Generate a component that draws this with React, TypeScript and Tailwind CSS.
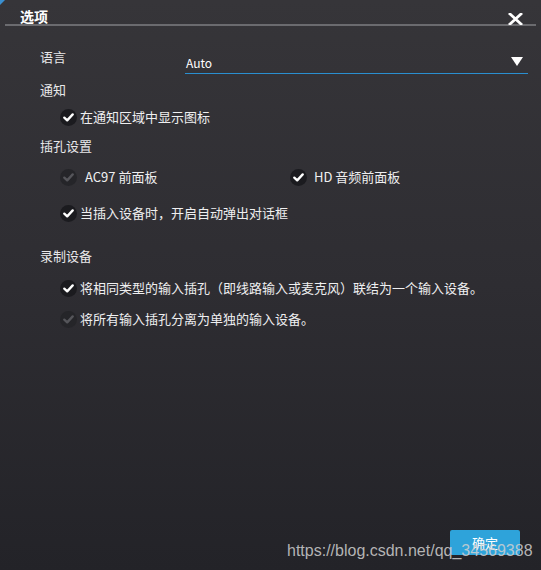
import React from "react";

function Check({ on = true }: { on?: boolean }) {
  return (
    <div
      className={
        "w-[17px] h-[17px] rounded-full flex items-center justify-center shrink-0 " +
        (on ? "bg-[#1b1b1f]" : "bg-[#252529]")
      }
    >
      <svg width="11" height="9" viewBox="0 0 11 9">
        <path
          d="M1.3 4.6 L4.2 7.4 L9.7 1.4"
          fill="none"
          stroke={on ? "#ffffff" : "#55555a"}
          strokeWidth="2.3"
          strokeLinecap="round"
          strokeLinejoin="round"
        />
      </svg>
    </div>
  );
}

function CheckRow({ on = true, text, gap = "gap-[3px]" }: { on?: boolean; text: string; gap?: string }) {
  return (
    <div className={"flex items-center h-[20px] " + gap}>
      <Check on={on} />
      <span className="text-[13px] leading-[18px] text-[#efeff0]">{text}</span>
    </div>
  );
}

export default function App() {
  return (
    <div
      className="relative w-[541px] h-[570px] overflow-hidden bg-gradient-to-b from-[#363539] via-[#2e2d32] to-[#232328] flex flex-col"
      style={{ fontFamily: '"Noto Sans CJK SC", "Noto Sans", sans-serif' }}
    >
      <div className="absolute left-0 top-0 w-0 h-0 border-t-[5px] border-r-[5px] border-t-[#3a8fd0] border-r-transparent" />
      {/* Title bar */}
      <div className="mx-[5px] w-[531px] h-[26px] border-b-2 border-[#6b6b6f] flex items-start justify-between">
        <span className="pl-[15px] pt-[7px] text-[14px] leading-[18px] font-bold text-white">选项</span>
        <svg className="mt-[13px] mr-[13px]" width="15" height="12" viewBox="0 0 15 12">
          <path d="M2 1 L13 11 M13 1 L2 11" stroke="#ffffff" strokeWidth="2.8" strokeLinecap="square" />
        </svg>
      </div>

      <div className="pl-[40px] flex flex-col">
        {/* Language */}
        <div className="flex h-[48px]">
          <span className="w-[145px] mt-[22px] text-[13px] leading-[18px] text-[#e8e8ea]">语言</span>
          <div className="w-[343px] h-full flex items-end justify-between border-b-[1.5px] border-[#2a8fd0]">
            <span className="pl-[1px] pb-[1px] text-[12px] leading-[18px] text-white">Auto</span>
            <svg className="mb-[7px] mr-[5px]" width="12" height="9" viewBox="0 0 12 9">
              <path d="M0 0 L12 0 L6 9 Z" fill="#ffffff" />
            </svg>
          </div>
        </div>

        <span className="mt-[7px] text-[13px] leading-[18px] text-[#e8e8ea]">通知</span>
        <div className="mt-[8px] pl-[20px]">
          <CheckRow text="在通知区域中显示图标" />
        </div>

        <span className="mt-[10px] text-[13px] leading-[18px] text-[#e8e8ea]">插孔设置</span>
        <div className="mt-[12px] pl-[20px] flex">
          <div className="w-[230px]">
            <CheckRow on={false} text="AC97 前面板" gap="gap-[8px]" />
          </div>
          <CheckRow text="HD 音频前面板" gap="gap-[7px]" />
        </div>
        <div className="mt-[16px] pl-[20px]">
          <CheckRow text="当插入设备时，开启自动弹出对话框" />
        </div>

        <span className="mt-[24px] text-[13px] leading-[18px] text-[#e8e8ea]">录制设备</span>
        <div className="mt-[13px] pl-[20px]">
          <CheckRow text="将相同类型的输入插孔（即线路输入或麦克风）联结为一个输入设备。" />
        </div>
        <div className="mt-[11px] pl-[20px]">
          <CheckRow on={false} text="将所有输入插孔分离为单独的输入设备。" />
        </div>
      </div>

      <div className="mt-auto mb-[15px] mr-[21px] self-end w-[70px] h-[25px] bg-[#2ea3da] rounded-[2px] flex items-center justify-center">
        <span className="text-[13px] leading-[18px] text-white">确定</span>
      </div>

      <span
        className="absolute left-[287px] top-[541px] text-[16px] leading-[20px] text-[#d0d0d0]/85"
        style={{ fontFamily: '"Liberation Sans", Arial, sans-serif' }}
      >
        https://blog.csdn.net/qq_34569388
      </span>
    </div>
  );
}
